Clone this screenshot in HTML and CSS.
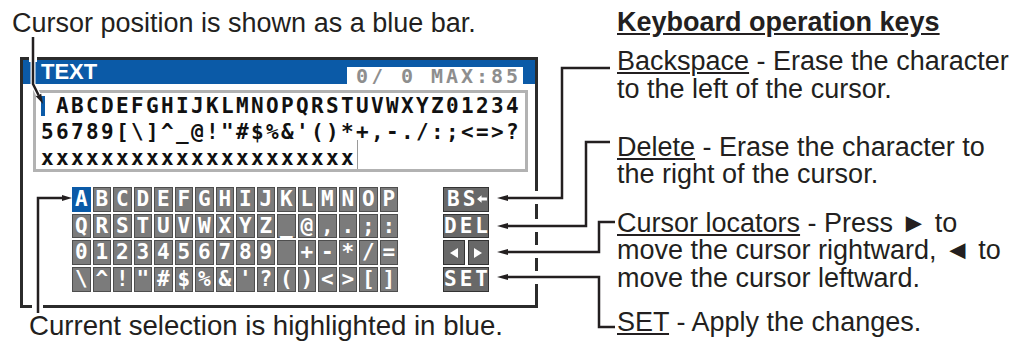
FILE: index.html
```html
<!DOCTYPE html>
<html lang="en">

<head>
    <meta charset="UTF-8">
    <meta name="viewport" content="width=device-width, initial-scale=1.0">
    <title>Text input screen</title>
    <link rel="stylesheet" href="styles.css">
</head>

<body>
    <div class="page">
        <div class="figure">
            <p class="caption caption-top">Cursor position is shown as a blue bar.</p>
            <div class="panel">
                <div class="titlebar">
                    <span class="title">TEXT</span>
                    <span class="counter">0/ 0 MAX:85</span>
                </div>
                <div class="input">
                    <div class="line"><span class="cursor"></span>ABCDEFGHIJKLMNOPQRSTUVWXYZ01234</div>
                    <div class="line">56789[\]^_@!"#$%&amp;'()*+,-./:;&lt;=&gt;?</div>
                    <div class="line"><span class="text-end">xxxxxxxxxxxxxxxxxxxxx</span></div>
                </div>
                <div class="keyboard">
                    <div class="keys">
                        <span class="key selected">A</span><span class="key">B</span><span class="key">C</span><span class="key">D</span>
                        <span class="key">E</span><span class="key">F</span><span class="key">G</span><span class="key">H</span>
                        <span class="key">I</span><span class="key">J</span><span class="key">K</span><span class="key">L</span>
                        <span class="key">M</span><span class="key">N</span><span class="key">O</span><span class="key">P</span>

                        <span class="key">Q</span><span class="key">R</span><span class="key">S</span><span class="key">T</span>
                        <span class="key">U</span><span class="key">V</span><span class="key">W</span><span class="key">X</span>
                        <span class="key">Y</span><span class="key">Z</span><span class="key">_</span><span class="key">@</span>
                        <span class="key">,</span><span class="key">.</span><span class="key">;</span><span class="key">:</span>

                        <span class="key">0</span><span class="key">1</span><span class="key">2</span><span class="key">3</span>
                        <span class="key">4</span><span class="key">5</span><span class="key">6</span><span class="key">7</span>
                        <span class="key">8</span><span class="key">9</span><span class="key"></span><span class="key">+</span>
                        <span class="key">-</span><span class="key">*</span><span class="key">/</span><span class="key">=</span>

                        <span class="key">\</span><span class="key">^</span><span class="key">!</span><span class="key">"</span>
                        <span class="key">#</span><span class="key">$</span><span class="key">%</span><span class="key">&amp;</span>
                        <span class="key">'</span><span class="key">?</span><span class="key">(</span><span class="key">)</span>
                        <span class="key">&lt;</span><span class="key">&gt;</span><span class="key">[</span><span class="key">]</span>
                    </div>
                    <div class="fn-keys">
                        <span class="fn wide">BS<svg class="bs-arrow" width="14" height="10" viewBox="0 0 14 10"><path d="M0 5L6 0V3H13V7H6V10Z" fill="#fff"/></svg></span>
                        <span class="fn wide">DEL</span>
                        <span class="fn"><svg width="8" height="10" viewBox="0 0 8 10"><path d="M8 0V10L0 5Z" fill="#fff"/></svg></span>
                        <span class="fn"><svg width="8" height="10" viewBox="0 0 8 10"><path d="M0 0V10L8 5Z" fill="#fff"/></svg></span>
                        <span class="fn wide">SET</span>
                    </div>
                </div>
            </div>
            <p class="caption caption-bottom">Current selection is highlighted in blue.</p>
        </div>

        <div class="notes">
            <h2 class="notes-title">Keyboard operation keys</h2>
            <p class="note note-bs"><u>Backspace</u> - Erase the character<br>to the left of the cursor.</p>
            <p class="note note-del"><u>Delete</u> - Erase the character to<br>the right of the cursor.</p>
            <p class="note note-loc"><u>Cursor locators</u> - Press &#9658; to<br>move the cursor rightward, &#9668; to<br>move the cursor leftward.</p>
            <p class="note note-set"><u>SET</u> - Apply the changes.</p>
        </div>

        <!-- leader lines of the figure -->
        <svg class="leaders" width="1024" height="343" viewBox="0 0 1024 343">
            <g fill="#fff">
                <rect x="530" y="191" width="10" height="13" />
                <rect x="530" y="219" width="10" height="13" />
                <rect x="530" y="245" width="10" height="13" />
                <rect x="530" y="271" width="10" height="13" />
                <rect x="32" y="302" width="11" height="8" />
                <rect x="29" y="55" width="8" height="7" />
            </g>
            <path d="M33 37V84L38.5 95" fill="none" stroke="#fff" stroke-width="5" />
            <g fill="none" stroke="#231f20" stroke-width="2.5">
                <path d="M33 37V84L38.5 95" />
                <path d="M38 313V198H63" />
                <path d="M610 68H562V198H507" />
                <path d="M610 142H586V226H507" />
                <path d="M615 222H599V252H507" />
                <path d="M615 327H599V277H507" />
            </g>
            <g fill="#231f20">
                <path d="M43 104L41.2 93.7L35.8 96.3Z" />
                <path d="M72 198L62 195V201Z" />
                <path d="M497 198L508 195V201Z" />
                <path d="M497 226L508 223V229Z" />
                <path d="M497 252L508 249V255Z" />
                <path d="M497 277L508 274V280Z" />
            </g>
        </svg>
    </div>
</body>

</html>
```

FILE: styles.css
```css
body {
    margin: 0;
    background-color: #fff;
    color: #231f20;
    font-family: "Liberation Sans", Arial, sans-serif;
}

.page {
    position: relative;
    display: flex;
    width: 1024px;
    height: 343px;
    overflow: hidden;
}

.figure {
    flex: none;
    width: 540px;
}

.caption {
    margin: 0;
    font-size: 27px;
    line-height: 28px;
    white-space: nowrap;
}

.caption-top {
    padding: 9px 0 0 12px;
}

.caption-bottom {
    margin: 4px 0 0 29px;
    font-size: 27.6px;
}

/* screen panel */
.panel {
    width: 512px;
    height: 244.5px;
    margin: 20px 0 0 20px;
    border: 3px solid #2b2b2b;
    background-color: #fff;
}

.titlebar {
    display: flex;
    justify-content: space-between;
    align-items: flex-end;
    height: 24px;
    padding: 0 12px 0 18px;
    background-color: #0b5aa7;
}

.title {
    align-self: stretch;
    color: #fff;
    font-size: 22px;
    font-weight: bold;
    line-height: 24px;
}

.counter {
    width: 167px;
    height: 17px;
    padding-left: 9px;
    overflow: hidden;
    background-color: #fff;
    color: #8e8e8e;
    font: bold 20px/19px "DejaVu Sans Mono", monospace;
    letter-spacing: 2.96px;
    white-space: pre;
}

.input {
    height: 76px;
    margin: 6px 7px 0 10px;
    padding-left: 5px;
    border: 3px solid #b2b2b2;
    overflow: hidden;
    color: #111;
    font: bold 21px/26px "DejaVu Sans Mono", monospace;
    letter-spacing: 2.36px;
}

.line {
    height: 26px;
    white-space: pre;
}

.cursor {
    display: inline-block;
    width: 15px;
    height: 20px;
    vertical-align: -3px;
    background: linear-gradient(to right, #0b5aa7 0 4px, transparent 4px);
}

.text-end {
    padding: 6px 1px 2px 0;
    border-right: 1px solid #9a9a9a;
}

/* on-screen keyboard */
.keyboard {
    display: flex;
    gap: 45px;
    margin: 15px 0 0 49px;
}

.keys {
    display: grid;
    grid-template-columns: repeat(16, 18.5px);
    grid-auto-rows: 24.5px;
    gap: 2.2px 2px;
}

.key,
.fn {
    display: flex;
    justify-content: center;
    align-items: center;
    color: #fff;
    font: bold 21px/22.5px "DejaVu Sans Mono", monospace;
}

.key {
    background-color: #7b7b7b;
    border: 1px solid #4e4e4e;
}

.key.selected {
    background-color: #0b5aa7;
    border-color: #0b5aa7;
}

.fn-keys {
    display: grid;
    grid-template-columns: 21.5px 21.5px;
    grid-auto-rows: 24.5px;
    gap: 2.2px 3px;
}

.fn {
    background-color: #686868;
    border: 1px solid #333;
    letter-spacing: 3px;
}

.fn.wide {
    grid-column: span 2;
    padding-left: 3px;
}

.bs-arrow {
    margin-left: -1px;
}

/* key descriptions */
.notes {
    padding-left: 77px;
    font-size: 27px;
    line-height: 27.5px;
    white-space: nowrap;
}

.notes-title {
    margin: 9px 0 0;
    font-size: 27px;
    font-weight: bold;
    line-height: 27.5px;
    text-decoration: underline;
}

.note {
    margin: 0;
}

.note-bs {
    margin-top: 11.7px;
}

.note-del {
    margin-top: 30.5px;
}

.note-loc {
    margin-top: 21.3px;
}

.note-set {
    margin-top: 16.2px;
}

.leaders {
    position: absolute;
    top: 0;
    left: 0;
    pointer-events: none;
}
```
